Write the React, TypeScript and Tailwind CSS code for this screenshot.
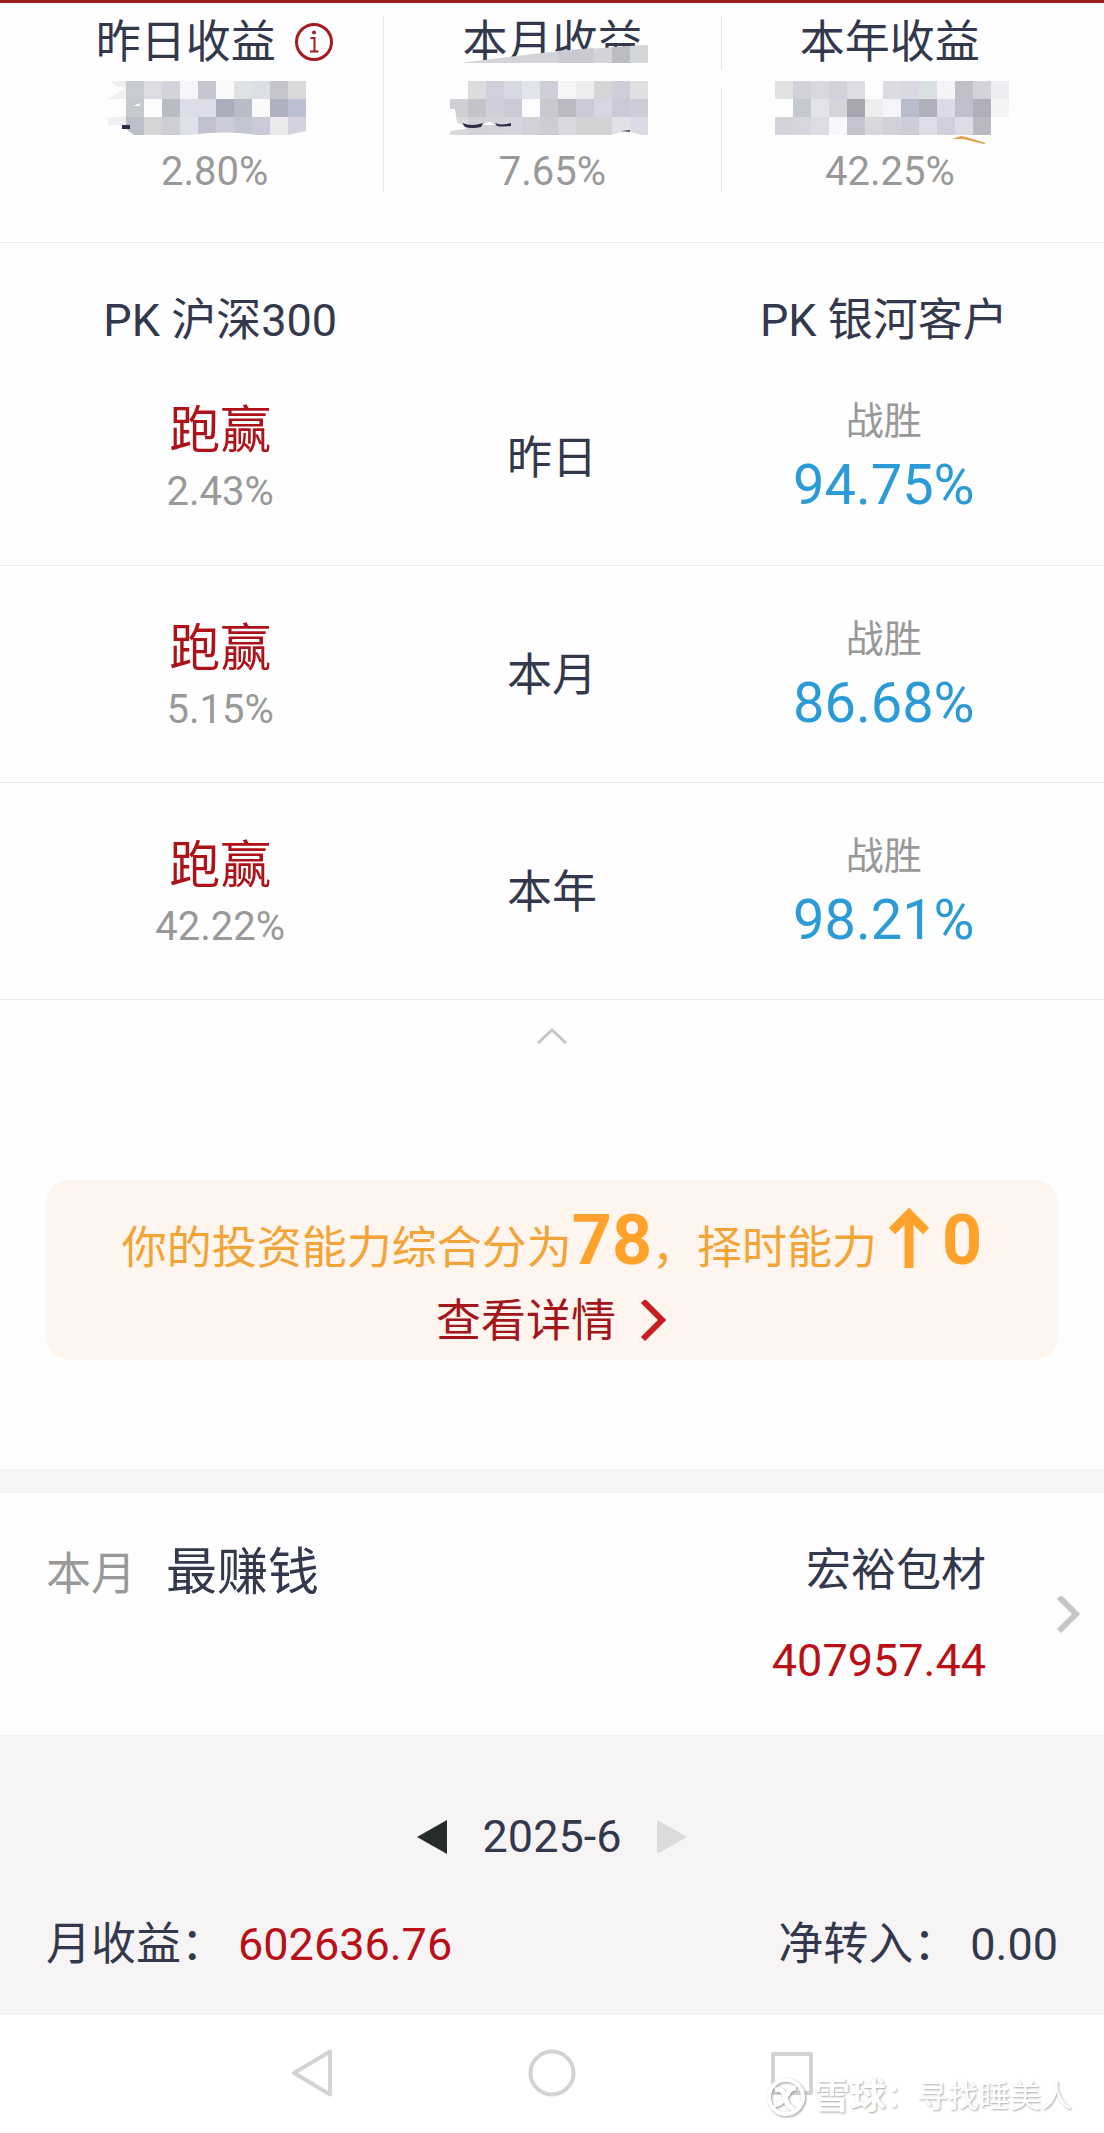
type Mosaic = {
  x: number;
  rows: string[];
};

// one colour per 18px cell, "-" leaves the cell empty
const mosaics: Record<string, Mosaic> = {
  day: {
    x: 28,
    rows: [
      'c8cbd1 dcdde3 d3d3db f6f6fa c6c5cf fafafa dfe1e2 dcdfe6 c5c3cc dadada',
      'c6cacf fcfcfd b9bcc3 dcdde8 dcdde8 a9acba b9bcc6 fafafa b0b1c0 bcbed3',
      'bcbfc8 d6d6d8 cdced6 dfe1ea c2c2ce cccdd6 c3c6d0 cccad8 ece9ed d6d1de',
    ],
  },
  month: {
    x: 15,
    rows: [
      '- dcdcdc d0d0dc d8d8e2 e0e4ec cfcedb f6f4f7 eeecec d6d4d6 d0cddb e0e0e2',
      'd0d0d4 c3c3c9 cfcedb cdcad8 fdfdfd c9c8d2 bbbac2 cbc9d6 d6d5e2 cbc9d8 cfccd9',
      'dadade d2d2d6 d3d3da d6d4de d3d1d8 cdcbd6 d8d7e2 d3d1d3 d3d1d3 e2e2e6 dcdae4',
    ],
  },
  year: {
    x: 2,
    rows: [
      'e0e1e2 d0d1da d9d8e2 d3d2dc dddce4 - dcdbe4 d9d8e3 dadfe0 f5f3f8 c1bfca d3d3dc eeedf2',
      '- c5c9d0 e2e3ee d6d6da a8a7b1 eeeeee f6f4f9 b9bcca b0b0ba dcdae6 c1bfce b0b0b9 f5f3f4',
      'd4d3dc d6d6df dcdbe6 f8f7fb c4c3d0 d8d8da d2d1da cdccd8 dedde8 d0cfdd dcdbe6 bab9c2 -',
    ],
  },
};

const stats = [
  { id: 'day', title: '昨日收益', rate: '2.80%' },
  { id: 'month', title: '本月收益', rate: '7.65%' },
  { id: 'year', title: '本年收益', rate: '42.25%' },
];

const pkRows = [
  { period: '昨日', diff: '2.43%', beat: '94.75%' },
  { period: '本月', diff: '5.15%', beat: '86.68%' },
  { period: '本年', diff: '42.22%', beat: '98.21%' },
];

function MosaicBlock({ id }: { id: string }) {
  const { x, rows } = mosaics[id];
  return (
    <svg width="234" height="54" viewBox="0 0 234 54" className="relative mt-[11px] overflow-visible" shapeRendering="crispEdges" aria-hidden="true">
      {rows.map((row, r) =>
        row.split(' ').map((c, i) =>
          c === '-' ? null : <rect key={`${r}-${i}`} x={x + i * 18} y={r * 18} width="18" height="18" fill={`#${c}`} />
        )
      )}
      {id === 'day' && (
        <g shapeRendering="auto">
          <path d="M12 0H28V7L20 6ZM28 7V18H10ZM10 37L28 35V44H10Z" fill="#eef0f2" />
          <path d="M35 25L43 22L41 25Z" fill="#fff" />
          <path d="M28 48L36 54H28Z" fill="#fff" />
          <path d="M24 44H32V48H24Z" fill="#2b2a4a" />
          <path d="M92 54Q124 49 160 54Z" fill="#fff" />
          <path d="M190 54L208 50V54Z" fill="#fff" />
        </g>
      )}
      {id === 'month' && (
        <g shapeRendering="auto">
          <path d="M33 -19L123 -30L213 -36V-18H27Z" fill="#d3d4da" />
          <path d="M123 -30L159 -33V-18H123Z" fill="#c9cad4" />
          <path d="M177 -34L195 -35V-18H177Z" fill="#bcbdc2" />
          <path d="M195 -35L213 -36V-18H195Z" fill="#d3d7d8" />
          <path d="M15 28L20 28L22 42L33 44L30 48L15 50Z" fill="#fff" />
          <path d="M27 42Q37 46 48 42L46 46Q37 48 30 46Z" fill="#2b2a4a" />
          <path d="M48 44Q54 38 60 44Z" fill="#fff" />
          <path d="M60 42Q68 45 76 42V45Q68 46 62 45Z" fill="#2b2a4a" />
          <path d="M176 54L192 50L206 54Z" fill="#fff" />
          <path d="M186 50L195 49V51Z" fill="#4a4a5e" />
        </g>
      )}
      {id === 'year' && <path d="M179 58L188 55L193 56L213 62L211 63L190 58Z" fill="#e0a050" shapeRendering="auto" />}
    </svg>
  );
}

function Stats() {
  return (
    <section className="flex border-b border-[#e9e9eb] px-[46px] pt-[13px] pb-[50px]">
      {stats.map((s, i) => (
        <div key={s.id} className="flex flex-1">
          {i > 0 && (
            <div className="flex w-px flex-col">
              <div className="h-[54px] bg-[#e6e6ea]" />
              <div className={i === 2 ? 'h-[18px]' : 'h-[18px] bg-[#e6e6ea]'} />
              <div className="flex-1 bg-[#e6e6ea]" />
            </div>
          )}
          <div className="flex flex-1 flex-col items-center">
            <h2 className="flex items-center text-[45px] leading-[54px]">
              {s.title}
              {i === 0 && (
                <button type="button" aria-label="收益说明" className="ml-[18px]">
                  <svg width="40" height="40" viewBox="0 0 40 40" fill="none">
                    <circle cx="20" cy="19" r="17.500" stroke="#a81a22" strokeWidth="3" />
                    <circle cx="20" cy="9.500" r="2" fill="#a81a22" />
                    <path d="M16.5 15H20.5V28.500M16 28.500H24.5" stroke="#a81a22" strokeWidth="2" />
                  </svg>
                </button>
              )}
            </h2>
            <MosaicBlock id={s.id} />
            <p className="mt-[17px] text-[40px] leading-10 text-[#999]">{s.rate}</p>
          </div>
        </div>
      ))}
    </section>
  );
}

function PkTable() {
  return (
    <table className="w-full table-fixed border-collapse text-center">
      <thead>
        <tr className="text-[45px] leading-[54px]">
          <th className="w-[35%] pt-[51px] pl-[54px] font-normal">PK 沪深300</th>
          <th className="w-[30%]" />
          <th className="w-[35%] pt-[51px] pr-[54px] font-normal">PK 银河客户</th>
        </tr>
      </thead>
      <tbody>
        {pkRows.map((row) => (
          <tr key={row.period} className="h-[217px] border-b border-[#e9e9eb]">
            <td className="pl-[54px]">
              <p className="text-[51px] leading-[72px] text-[#ae1219]">跑赢</p>
              <p className="text-[40px] leading-[50px] text-[#999]">{row.diff}</p>
            </td>
            <td className="pt-1 text-[45px]">{row.period}</td>
            <td className="pr-[54px]">
              <p className="text-[38px] leading-[58px] text-[#999]">战胜</p>
              <p className="text-[56px] leading-[70px] text-[#2a9bd7]">{row.beat}</p>
            </td>
          </tr>
        ))}
      </tbody>
    </table>
  );
}

function ScoreBanner() {
  return (
    <section className="px-[46px] pt-[108px] pb-[109px]">
      <div className="rounded-3xl bg-[#fff5ef] pt-[25px] pb-2 text-center">
        <p className="text-[45px] leading-[70px] text-[#f3a437]">
          你的投资能力综合分为
          <strong className="text-[70px] font-bold text-[#ffa22b]">78</strong>
          ，择时能力
          <svg width="40" height="60" viewBox="0 0 40 60" fill="none" className="mr-[13px] -mb-1 ml-3 inline align-baseline" aria-hidden="true">
            <path d="M20 60V6M3 23L20 6L37 23" stroke="#ffa22b" strokeWidth="9" />
          </svg>
          <strong className="text-[70px] font-bold text-[#ffa22b]">0</strong>
        </p>
        <a href="#detail" className="mt-2 flex items-center justify-center gap-6 text-[45px] leading-[60px] text-[#a3161c]">
          查看详情
          <svg width="28" height="44" viewBox="0 0 28 44" fill="none" aria-hidden="true">
            <path d="M3 1L22 20L3 39" stroke="#c81e22" strokeWidth="6" />
          </svg>
        </a>
      </div>
    </section>
  );
}

function BestStock() {
  return (
    <a href="#best" className="flex items-center border-t-[24px] border-[#f6f4f5] pt-12 pr-6 pb-11 pl-[46px]">
      <div className="flex flex-1 items-baseline gap-[30px] self-start">
        <span className="text-[45px] leading-[64px] text-[#999]">本月</span>
        <span className="text-[51px] leading-[64px]">最赚钱</span>
      </div>
      <div className="flex flex-col gap-[30px] text-right text-[45px] leading-[60px]">
        <span>宏裕包材</span>
        <span className="text-[#b81016]">407957.44</span>
      </div>
      <svg width="24" height="40" viewBox="0 0 24 40" fill="none" className="ml-[70px]" aria-hidden="true">
        <path d="M3 1L20 18L3 35" stroke="#c6c6c6" strokeWidth="6" />
      </svg>
    </a>
  );
}

function MonthSummary() {
  return (
    <section className="bg-[#f7f4f6] px-[46px] pt-[72px] pb-[40px] text-[45px] leading-[60px]">
      <div className="flex items-center justify-center gap-8">
        <button type="button" aria-label="上个月">
          <svg width="30" height="34" viewBox="0 0 30 34">
            <path d="M0 17L30 0V34Z" fill="#262b2b" />
          </svg>
        </button>
        <span className="px-1">2025-6</span>
        <button type="button" aria-label="下个月" disabled>
          <svg width="30" height="34" viewBox="0 0 30 34">
            <path d="M30 17L0 0V34Z" fill="#dcdadb" />
          </svg>
        </button>
      </div>
      <div className="mt-12 flex justify-between">
        <p className="flex gap-3">
          <span>月收益：</span>
          <span className="text-[#b81016]">602636.76</span>
        </p>
        <p className="flex gap-3">
          <span>净转入：</span>
          <span>0.00</span>
        </p>
      </div>
    </section>
  );
}

function NavBar() {
  return (
    <nav className="relative flex h-[117px] items-center justify-center gap-48 bg-white">
      <button type="button" aria-label="返回">
        <svg width="48" height="48" viewBox="0 0 48 48" fill="none" stroke="#d3d3d3" strokeWidth="4" strokeLinejoin="round">
          <path d="M6 24L42 2.500V45.500Z" />
        </svg>
      </button>
      <button type="button" aria-label="主页">
        <svg width="48" height="48" viewBox="0 0 48 48" fill="none" stroke="#d3d3d3" strokeWidth="4">
          <circle cx="24" cy="24" r="21.500" />
        </svg>
      </button>
      <button type="button" aria-label="最近任务">
        <svg width="48" height="48" viewBox="0 0 48 48" fill="none" stroke="#d3d3d3" strokeWidth="4" strokeLinejoin="round">
          <path d="M5 5H43V44H5Z" />
        </svg>
      </button>
      <div className="absolute right-8 bottom-3 flex items-center text-[31px] leading-[46px] text-white [text-shadow:1px_1px_2px_#aaa]">
        <svg width="40" height="40" viewBox="0 0 40 40" fill="none" className="mr-2 drop-shadow-[1px_1px_1px_#999]" aria-hidden="true">
          <circle cx="20" cy="20" r="17" stroke="#fff" strokeWidth="4" />
          <path d="M9 13C17 11 18 16 19 20C20 26 22 29 28 33M30 11C23 11 23 16 19 20C17 24 14 28 8 28" stroke="#fff" strokeWidth="5" />
        </svg>
        <span className="text-[36px] font-bold">雪球</span>
        <span>：寻找睡美人</span>
      </div>
    </nav>
  );
}

export default function App() {
  return (
    <div className="min-h-screen border-t-[3px] border-[#9a1c1c] bg-[#fefefe] font-[Roboto,'Noto_Sans_CJK_SC',sans-serif] text-[#33384d]" lang="zh-CN">
      <Stats />
      <PkTable />
      <button type="button" aria-label="收起" className="flex h-[72px] w-full items-center justify-center">
        <svg width="32" height="18" viewBox="0 0 32 18" fill="none">
          <path d="M2 16L16 3L30 16" stroke="#c4c4c6" strokeWidth="3" />
        </svg>
      </button>
      <ScoreBanner />
      <BestStock />
      <MonthSummary />
      <NavBar />
    </div>
  );
}
